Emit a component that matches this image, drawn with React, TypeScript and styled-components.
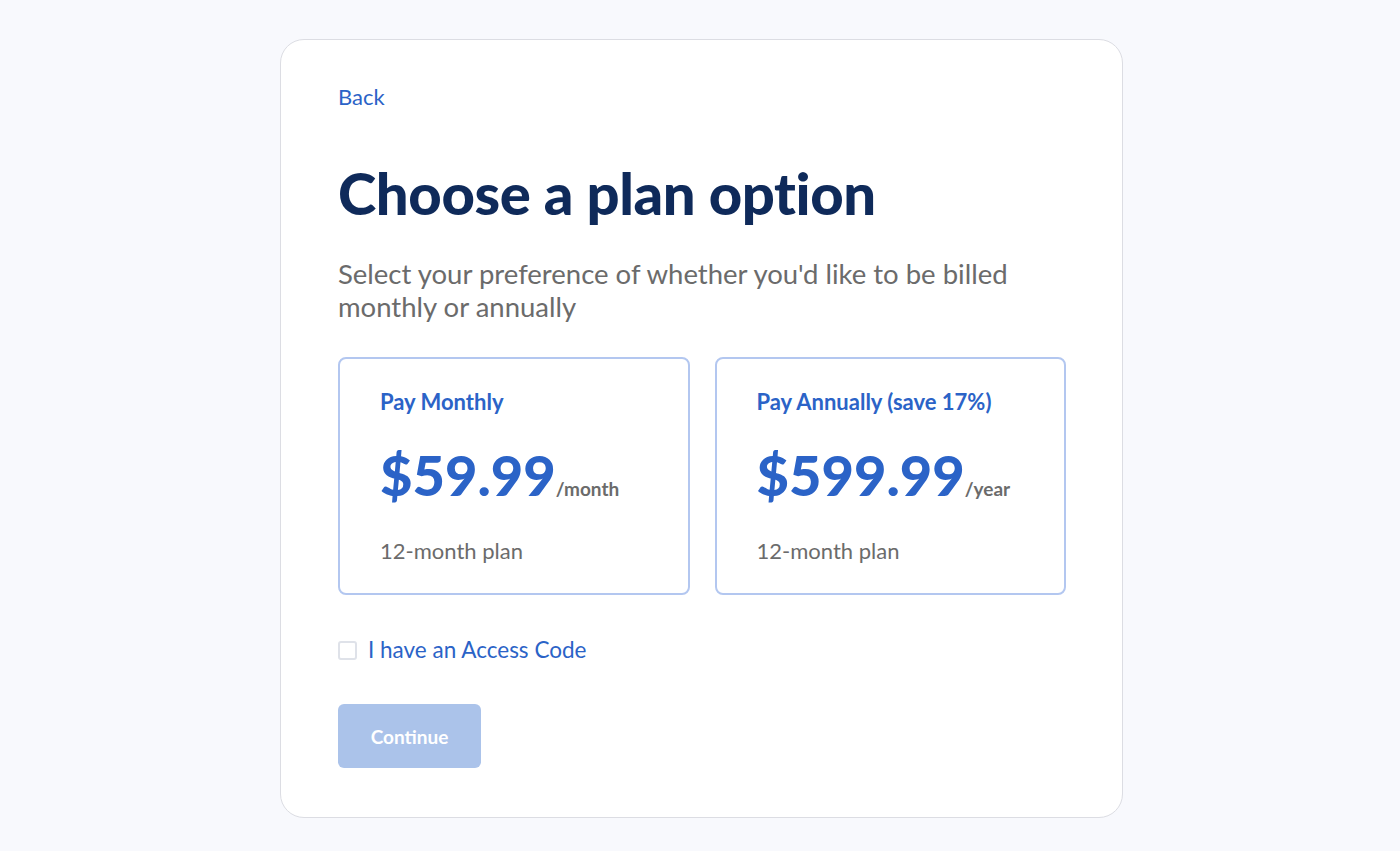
import styled, { createGlobalStyle } from 'styled-components';

type Plan = {
  title: string;
  price: string;
  period: string;
  term: string;
};

const plans: Plan[] = [
  { title: 'Pay Monthly', price: '$59.99', period: '/month', term: '12-month plan' },
  { title: 'Pay Annually (save 17%)', price: '$599.99', period: '/year', term: '12-month plan' },
];

const GlobalStyle = createGlobalStyle`
  html, body {
    margin: 0;
    padding: 0;
    background: #f8f9fd;
    font-family: 'Lato', 'Noto Sans', sans-serif;
  }
  * { box-sizing: border-box; }
`;

const App = () => {
  return (
    <S.Page>
      <GlobalStyle />
      <S.Panel>
        <S.BackLink href="#">Back</S.BackLink>
        <S.Title>Choose a plan option</S.Title>
        <S.Subtitle>Select your preference of whether you'd like to be billed monthly or annually</S.Subtitle>
        <S.PlanGrid>
          {plans.map((plan) => (
            <S.PlanCard key={plan.title}>
              <S.PlanTitle>{plan.title}</S.PlanTitle>
              <S.PriceRow>
                <S.Price>{plan.price}</S.Price>
                <S.Period>{plan.period}</S.Period>
              </S.PriceRow>
              <S.Term>{plan.term}</S.Term>
            </S.PlanCard>
          ))}
        </S.PlanGrid>
        <S.CheckRow>
          <S.CheckBox type="checkbox" />
          <S.CheckLabel>I have an Access Code</S.CheckLabel>
        </S.CheckRow>
        <S.ContinueButton disabled>Continue</S.ContinueButton>
      </S.Panel>
    </S.Page>
  );
};

export default App;

const S = {
  Page: styled.main`
    min-height: 851px;
    display: flex;
    justify-content: center;
    align-items: flex-start;
    padding: 39px 0 0 3px;
  `,
  Panel: styled.section`
    width: 843px;
    background: #fff;
    border: 1px solid #dcdde3;
    border-radius: 24px;
    padding: 44px 57px 49px;
    display: flex;
    flex-direction: column;
    align-items: flex-start;
  `,
  PlanGrid: styled.div`
    width: 728px;
    display: grid;
    grid-template-columns: 1fr 1fr;
    gap: 25px;
    margin-top: 34px;
  `,
  PlanCard: styled.div`
    height: 238px;
    border: 2px solid #b3c7f0;
    border-radius: 8px;
    padding: 29px 40px;
    display: flex;
    flex-direction: column;
  `,
  PriceRow: styled.div`
    display: flex;
    align-items: baseline;
    gap: 0;
    margin-top: 27px;
  `,
  CheckRow: styled.label`
    display: flex;
    align-items: center;
    gap: 11px;
    margin-top: 41px;
    cursor: pointer;
  `,

  // Typography
  BackLink: styled.a`
    color: #2b63c7;
    font-size: 22px;
    line-height: 26px;
    text-decoration: none;
  `,
  Title: styled.h1`
    margin: 51px 0 0;
    color: #0f2a5a;
    font-size: 58px;
    font-weight: 900;
    line-height: 64px;
    letter-spacing: -0.4px;
  `,
  Subtitle: styled.p`
    margin: 32px 0 0;
    max-width: 700px;
    color: #6b6b6b;
    font-size: 27.5px;
    line-height: 33px;
  `,
  PlanTitle: styled.h3`
    margin: 0;
    color: #2b63c7;
    font-size: 22px;
    font-weight: 700;
    line-height: 28px;
  `,
  Price: styled.span`
    color: #2b63c7;
    font-size: 56px;
    font-weight: 900;
    line-height: 64px;
  `,
  Period: styled.span`
    color: #6b6b6b;
    font-size: 19px;
    font-weight: 700;
  `,
  Term: styled.p`
    margin: 30px 0 0;
    color: #6b6b6b;
    font-size: 22px;
    line-height: 28px;
  `,
  CheckLabel: styled.span`
    color: #2b63c7;
    font-size: 22.5px;
    line-height: 28px;
  `,

  //Element
  CheckBox: styled.input`
    appearance: none;
    flex-shrink: 0;
    margin: 0;
    width: 19px;
    height: 19px;
    border: 2px solid #dfe2e9;
    border-radius: 3px;
    background: #fff;
  `,
  ContinueButton: styled.button`
    flex-shrink: 0;
    margin-top: 40px;
    width: 143px;
    height: 64px;
    border: none;
    border-radius: 6px;
    background: #abc3ea;
    color: #fff;
    font-family: inherit;
    font-size: 19px;
    font-weight: 700;
  `,
};
